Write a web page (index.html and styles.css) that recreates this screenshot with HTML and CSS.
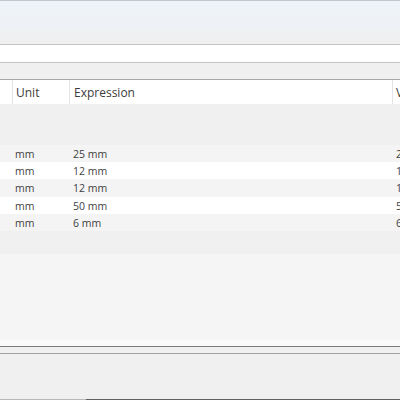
FILE: index.html
```html
<!DOCTYPE html>
<html>
<head>
<meta charset="utf-8">
<link rel="stylesheet" href="styles.css">
</head>
<body>
<div class="app">
  <div class="toolbar"></div>
  <div class="field"></div>
  <div class="band"></div>
  <div class="table">
    <div class="hrow">
      <div class="c c0"></div>
      <div class="c c1">Unit</div>
      <div class="c c2">Expression</div>
      <div class="c c3">V</div>
    </div>
    <div class="gap1"></div>
    <div class="row odd"><div class="c c0"></div><div class="c c1">mm</div><div class="c c2">25 mm</div><div class="c c3">25</div></div>
    <div class="row even"><div class="c c0"></div><div class="c c1">mm</div><div class="c c2">12 mm</div><div class="c c3">12</div></div>
    <div class="row odd"><div class="c c0"></div><div class="c c1">mm</div><div class="c c2">12 mm</div><div class="c c3">12</div></div>
    <div class="row even"><div class="c c0"></div><div class="c c1">mm</div><div class="c c2">50 mm</div><div class="c c3">50</div></div>
    <div class="row odd"><div class="c c0"></div><div class="c c1">mm</div><div class="c c2">6 mm</div><div class="c c3">6</div></div>
    <div class="gap2"></div>
  </div>
  <div class="panel"></div>
  <div class="split"></div>
  <div class="footer"></div>
  <div class="bottomline"><div class="bl-a"></div><div class="bl-b"></div></div>
</div>
</body>
</html>
```
FILE: styles.css
```css
html, body {
  margin: 0;
  padding: 0;
  background: #f0f0f0;
}
.app {
  width: 400px;
  height: 400px;
  display: flex;
  flex-direction: column;
  overflow: hidden;
  font-family: "Open Sans", "Noto Sans", sans-serif;
}
.toolbar {
  height: 43px;
  flex: none;
  border-top: 1px solid #c3c7cd;
  background: linear-gradient(to bottom, #eef3f8 0px, #eef2f7 22px, #f0f0f0 38px, #f0f0f0 43px);
}
.field {
  height: 17px;
  flex: none;
  background: #ffffff;
  border-top: 1px solid #c4c4c4;
  border-bottom: 1px solid #c4c4c4;
}
.band {
  height: 16px;
  flex: none;
  background: #f0f0f0;
  border-bottom: 1px solid #a8a8a8;
}
.table {
  flex: none;
  display: flex;
  flex-direction: column;
}
.hrow {
  height: 24px;
  display: flex;
  background: #ffffff;
  color: #3c3c3c;
  font-size: 12px;
}
.hrow .c {
  line-height: 25px;
  border-right: 1px solid #e4e4e4;
}
.c {
  flex: none;
  white-space: nowrap;
  overflow: hidden;
  box-sizing: border-box;
}
.c0 { width: 13px; }
.c1 { width: 57px; padding-left: 3px; }
.c2 { width: 323px; padding-left: 4px; }
.c3 { flex: 1; padding-left: 3px; }
.hrow .c3 { border-right: none; }
.gap1 {
  height: 41px;
  background: #f0f0f0;
}
.row {
  height: 17.2px;
  display: flex;
  font-size: 10.5px;
  color: #3f3f3f;
  line-height: 18px;
}
.row .c1 { padding-left: 2px; }
.row .c2 { padding-left: 3px; }
.row .c3 { padding-left: 3px; }
.odd { background: #f4f4f4; }
.even { background: #ffffff; }
.gap2 {
  height: 23px;
  background: #f0f0f0;
}
.panel {
  height: 86px;
  flex: none;
  background: #f5f5f5;
  border-bottom: 6px solid #fafafa;
}
.split {
  height: 6px;
  flex: none;
  background: #f0f0f0;
  border-top: 1px solid #7c7c7c;
  border-bottom: 1px solid #a4a4a4;
}
.footer {
  flex: 1;
  background: #f0f0f0;
}
.bottomline {
  height: 1px;
  flex: none;
  display: flex;
}
.bl-a { width: 86px; background: #b8b8b8; }
.bl-b { flex: 1; background: #606060; }
```
